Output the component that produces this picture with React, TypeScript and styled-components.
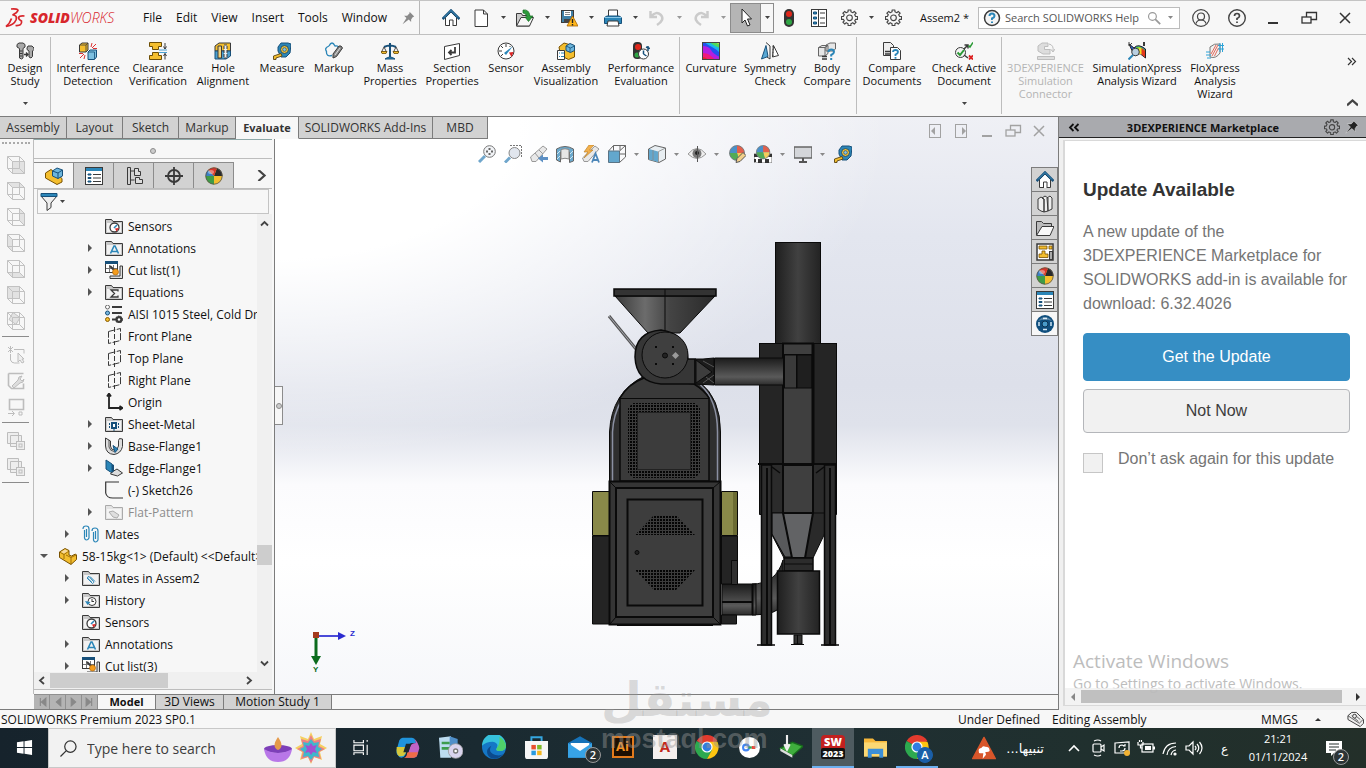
import React, { ReactNode } from "react";
import styled, { createGlobalStyle, css } from "styled-components";

const ui = `"Open Sans", "Noto Sans", sans-serif`;

const GlobalStyle = createGlobalStyle`
  *, *::before, *::after { box-sizing: border-box; }
  body { margin: 0; background: #f7f7f7; color: #111; font-family: ${ui}; font-size: 12px; }
  button, input { font: inherit; color: inherit; }
  button { border: 0; padding: 0; background: none; display: inline-flex; align-items: center; justify-content: center; }
`;

/* ---------- icon artwork, 18 x 18 grid ---------- */

const ink = "#3a3a3a";
const blue = "#2b86b8";
const navy = "#17507a";
const gold = "#f4be2e";

const folder = (
  <g>
    <path d="M.5 16.500V2.500h6l1.500 2h9.500v12z" fill="#c9c9c9" stroke={ink} />
    <rect x="2" y="6" width="14" height="9" fill="#f2f2f2" />
  </g>
);
const gauge = (
  <g>
    <circle cx="9.500" cy="10.500" r="4.500" fill="#fff" stroke={ink} strokeWidth="1.300" />
    <path d="M9 11l3-3" stroke={blue} strokeWidth="1.600" />
    <path d="M10 11.500l4-.5-2.500 3.500z" fill="#d22" />
  </g>
);
const gear = (
  <g fill="none" stroke="#444" strokeWidth="1.200">
    <path d="M7.500 1h3v2l2 1 1.500-1.500 2 2L14.500 6l1 2h2v3h-2l-1 1.500 1.500 1.500-2 2-1.500-1.500-2 1v2h-3v-2l-2-1L4 16l-2-2 1.500-1.500-1-1.500h-2V8h2l1-2L2 4.500l2-2L5.500 4l2-1z" strokeLinejoin="round" />
    <circle cx="9" cy="9.300" r="3" />
  </g>
);
const wireCube = (face: string) => (
  <g fill="none" stroke="#c2c2c2">
    <path d={face} fill="#e2e2e2" />
    <path d="M.5 .5h12v12H.5zM5.500 5.500h12v12h-12zM.5 .5l5 5M12.500 .5l5 5M.5 12.500l5 5M12.500 12.500l5 5" />
  </g>
);
const tape = (
  <g>
    <path d="M5 9V5l3-4h7l3 1-1 9-4 4H8z" fill={blue} stroke={navy} />
    <circle cx="11.500" cy="7.500" r="4" fill={gold} stroke={navy} />
    <circle cx="11.500" cy="7.500" r="1.800" fill="#8cc3e2" stroke={navy} strokeWidth=".7" />
    <path d="M8 11.500l-7.500 2.500v3.500H3v-1.500l6-2z" fill={gold} stroke="#5a4410" strokeWidth=".9" />
  </g>
);
const ball = (
  <g>
    <circle cx="9" cy="9" r="8.500" fill={gold} />
    <path d="M9 9l3-8a8.500 8.500 0 0 1 5.500 8z" fill="#2a2a2a" />
    <path d="M9 9L3 3a8.500 8.500 0 0 1 9-2z" fill="#d9362b" />
    <path d="M9 9L.5 9a8.500 8.500 0 0 1 2.500-6z" fill="#3b7fc4" />
    <path d="M9 9H.5a8.500 8.500 0 0 0 8.500 8.500z" fill="#3f9c46" />
    <circle cx="9" cy="9" r="8.200" fill="none" stroke="#555" strokeWidth=".8" />
    <ellipse cx="6" cy="5" rx="3" ry="2" fill="#fff" opacity=".4" />
  </g>
);
const viewBall = (
  <g>
    <circle cx="9" cy="8" r="7.500" fill="#4a90c8" />
    <path d="M9 8V.5a7.500 7.500 0 0 1 7.500 7.500z" fill="#e2604c" />
    <path d="M9 8h7.500A7.500 7.500 0 0 1 11 15z" fill="#f3cd5a" />
    <path d="M9 8H1.500A7.500 7.500 0 0 0 11 15z" fill="#52ab56" />
    <circle cx="9" cy="8" r="7.500" fill="none" stroke="#777" strokeWidth=".8" />
  </g>
);
const listBox = (
  <g>
    <rect x=".5" y=".5" width="17" height="17" fill="#fff" stroke={ink} />
    <rect x="1" y="1" width="16" height="3" fill={blue} />
    <path d="M3 7h3v1H3zM3 10.500h3v1H3zM3 14h3v1H3z" stroke={navy} fill={blue} />
    <path d="M8 7.500h8M8 11h8M8 14.500h8" stroke={ink} />
  </g>
);
const plane = (
  <g fill="none" stroke={ink}>
    <path d="M3.500 4.500l12-3v12l-12 3z" strokeDasharray="7 1.500" />
    <path d="M9.500 0v18" strokeDasharray="5 2" />
  </g>
);
const table = (
  <g>
    <rect x=".5" y=".5" width="12" height="11" fill="#fff" stroke={ink} />
    <rect x="0" y="0" width="13" height="3" fill={navy} />
    <path d="M1 7.500h11M4.500 4v7M8.500 4v7" stroke="#777" />
    <path d="M15 5h2.500v12.500H5V15h10z" fill="#ddd" stroke={ink} />
    <path d="M5 5l5 5" stroke={ink} strokeWidth="2" />
    <circle cx="10.500" cy="11" r="3" fill="#f59c1c" stroke="#a05a00" strokeWidth=".6" />
  </g>
);
const home = (
  <g>
    <path d="M3.500 8.500v8h11v-8L9 3z" fill="#fff" stroke={ink} />
    <path d="M7.500 17v-6h3.500v6" fill="#fff" stroke={ink} />
    <path d="M.5 10L9 1.500l8.500 8.500" fill="none" stroke={navy} strokeWidth="2.500" />
    <path d="M2 8.500L9 1.500l7 7" fill="none" stroke="#4fa3cf" strokeWidth=".8" />
  </g>
);
const chrome = (
  <g>
    <path d="M9 9L1.200 4.500A9 9 0 0 1 16.800 4.500z" fill="#e33b2e" />
    <path d="M9 9L1.200 4.500A9 9 0 0 0 9 18l3.800-6.500z" fill="#2da94f" />
    <path d="M9 5h7.800A9 9 0 0 1 9 18l3.800-7z" fill="#fdc511" />
    <circle cx="9" cy="9" r="4.200" fill="#fff" />
    <circle cx="9" cy="9" r="3.300" fill="#2f7de1" />
  </g>
);
const compareDocs = (
  <g>
    <path d="M.5 .5h7l3 3v10H.500z" fill="#eee" stroke={ink} />
    <path d="M7.500 5.500h7l3 3v9h-10z" fill="#fff" stroke={ink} />
    <path d="M2 9.500h5M2 12h5" stroke={ink} strokeWidth="1.500" />
    <path d="M10 10q0-2 2.500-2t2.500 2q0 1.500-2.500 2.500v1.500M12.500 15v1.800" stroke={blue} strokeWidth="1.800" fill="none" />
  </g>
);

const art: Record<string, ReactNode> = {
  home,
  gear,
  tape,
  ball,
  listBox,
  plane,
  table,
  chrome,
  compareDocs,
  newDoc: <path d="M3 1h8.500l4 4v12.500H3zM11.500 1v4h4" fill="#fff" stroke={ink} />,
  openDoc: (
    <g>
      <path d="M.5 17V4.500h5l1 2h7V17z" fill="#ccc" stroke={ink} />
      <path d="M.5 17L5 8.500h12.500L13.500 17z" fill="#f6f6f6" stroke={ink} />
      <path d="M7 1q6-1 7 6h3l-4.500 5.500L9 8h2q-1-4-4-4z" fill="#2c9b3b" stroke="#176c23" strokeWidth=".7" />
    </g>
  ),
  save: (
    <g>
      <rect x="1.500" y="1.500" width="12" height="12" fill="#3f7fa6" stroke={ink} />
      <rect x="4" y="2" width="7" height="5" fill="#fff" />
      <path d="M5 3.500h5M5 5.500h5" stroke="#888" />
      <rect x="4" y="10" width="6" height="4" fill="#444" />
      <path d="M12.500 7L18 17H7z" fill="#ffb71b" stroke="#a86200" strokeWidth=".8" />
      <path d="M12.500 10v4M12.500 15v1.500" stroke="#222" strokeWidth="1.400" />
    </g>
  ),
  print: (
    <g>
      <path d="M4.500 1h9v7h-9z" fill="#fff" stroke={ink} />
      <path d="M.5 8.500L3 7h12l2.500 1.500v6H.500z" fill={blue} stroke={navy} />
      <path d="M.5 8.500h17" stroke="#8cc8e8" />
      <path d="M4 12h10l1 5H3z" fill="#fff" stroke={ink} />
    </g>
  ),
  undo: <path d="M2.500 2v6H9M3 7.500q5-6 10-1.500 4 5-4 10" fill="none" stroke="#cbcbcb" strokeWidth="2.500" />,
  redo: <path d="M15.500 2v6H9M15 7.500q-5-6-10-1.500-4 5 4 10" fill="none" stroke="#cbcbcb" strokeWidth="2.500" />,
  cursor: <path d="M5 0v14l3-3 2.500 6 2.500-1-2.500-6h4z" fill="#fff" stroke="#222" />,
  traffic: (
    <g>
      <rect x="4" y="0" width="10" height="18" rx="5" fill="#333" />
      <circle cx="9" cy="5" r="3" fill="#e0281c" />
      <circle cx="9" cy="13" r="3" fill="#2fa544" />
    </g>
  ),
  options: (
    <g>
      <rect x="1.500" y=".5" width="15" height="17" fill="#fff" stroke={ink} />
      <path d="M3.500 3h3v2h-3zM3.500 8h3v2h-3zM3.500 13h3v2h-3z" fill={blue} stroke={navy} />
      <path d="M8.500 1v16M10 4h5M10 9h5M10 14h5" stroke={ink} />
    </g>
  ),
  pin: <path d="M11 1l6 6-2 1-2 3v3l-3-3-8 6 5-8-3-3 4 0 3-3z" fill="#8a8a8a" />,
  pinDark: <path d="M11 1l6 6-2 1-2 3v4l-4-4-8 6 6-8-4-4 5 0 3-3z" fill="#222" stroke="#eee" strokeWidth=".6" />,
  search: (
    <g fill="none" stroke="#999" strokeWidth="1.500">
      <circle cx="7" cy="7" r="5" />
      <path d="M10.500 10.500l6.500 6.500" strokeWidth="2.200" />
    </g>
  ),
  helpBadge: (
    <g>
      <circle cx="9" cy="9" r="7.500" fill="#f4f4f4" stroke={ink} strokeWidth="1.500" />
      <path d="M6.500 7q0-2.500 2.500-2.500T11.500 7q0 1.500-2.500 2.500v1.500M9 12.500v1.500" fill="none" stroke={blue} strokeWidth="2" />
    </g>
  ),
  help: (
    <g fill="none" stroke="#444" strokeWidth="1.400">
      <circle cx="9" cy="9" r="8.300" />
      <path d="M6.500 7q0-2.500 2.500-2.500T11.500 7q0 1.500-2.500 2.500v1.500M9 12.500v1.500" strokeWidth="1.700" />
    </g>
  ),
  user: (
    <g fill="none" stroke="#444" strokeWidth="1.200">
      <circle cx="9" cy="9" r="8.300" />
      <circle cx="9" cy="7.500" r="3.500" />
      <path d="M4 14.500q1-3.500 5-3.500t5 3.500" />
    </g>
  ),
  minimize: <path d="M4 14h10" stroke="currentColor" strokeWidth="2" />,
  restore: (
    <g fill="none" stroke="currentColor" strokeWidth="1.300">
      <path d="M6.500 8V3.500h10v7H11" />
      <rect x="2" y="8" width="9" height="6" />
    </g>
  ),
  close: <path d="M4 4l10 10M14 4L4 14" stroke="currentColor" strokeWidth="1.500" />,
  prevDoc: (
    <g>
      <rect x="3.500" y="2.500" width="11" height="13" fill="none" stroke="currentColor" />
      <path d="M9 5v8L5 9z" fill="currentColor" />
    </g>
  ),
  nextDoc: (
    <g>
      <rect x="3.500" y="2.500" width="11" height="13" fill="none" stroke="currentColor" />
      <path d="M10 5v8l4-4z" fill="currentColor" />
    </g>
  ),
  bolts: (
    <g fill="#aaa" stroke={ink}>
      <path d="M1 2.500L3 1h4l2 1.500v2.500L7 6.500V16l-1.500 1L3.500 16V6.500L1 5z" />
      <path d="M3.500 9h3M3.500 11.500h3M3.500 14h3" />
      <path d="M12 4h4l2 2v1.500L16.500 9v5.500L15 16l-2-1V9l-2-1.500V6z" />
      <path d="M8 12.500h4M10 10.500l2 2-2 2" fill="none" strokeWidth="1.300" />
    </g>
  ),
  interference: (
    <g>
      <path d="M.5 3L3 1h6v7l-2 2H.500z" fill={gold} stroke={ink} />
      <path d="M.5 3H7v7M7 3l2-2" fill="none" stroke={ink} strokeWidth=".8" />
      <path d="M9 10l2-2h6.500v7l-2 2.500H9z" fill="#7dc0e0" stroke={navy} />
      <path d="M9 10h6.500v7" fill="none" stroke={navy} strokeWidth=".8" />
      <path d="M12 5l1-4M13 6l4-4M14 6.500h4M6 13l-1 4M5 12l-4 4M4 11.500H0" stroke="#d33" />
    </g>
  ),
  clearance: (
    <g>
      <path d="M.5 .5h12v4h-3v3h-6v-3h-3z" fill={gold} stroke="#6d4e05" />
      <path d="M.5 17.500h12v-4h-3v-3h-6v3h-3z" fill={gold} stroke="#6d4e05" />
      <path d="M10 8h8M10 10.500h8" stroke="#4aa0d0" />
      <path d="M16 1v6M14.500 4.500L16 7l1.500-2.500M16 17.500v-6M14.500 14l1.500-2.500 1.500 2.500" stroke={ink} fill="none" />
    </g>
  ),
  hole: (
    <g>
      <path d="M1 4l4-3h11.500v8H1z" fill={gold} stroke={ink} />
      <path d="M1 9h15.500v5L12 17H1z" fill="#4aa0d0" stroke={navy} />
      <path d="M4 4h3.500v12H4z" fill="#f1d27c" stroke={ink} />
      <path d="M10 3h3v13h-3z" fill="#eee" stroke={ink} strokeDasharray="3 1" />
    </g>
  ),
  markup: (
    <g>
      <path d="M4 4q3-6 6 0 4-1 3 3M4 4q-5 2-2.500 5.500Q1 15 7 13.500" fill="none" stroke={blue} strokeWidth="1.300" />
      <path d="M8 12l6-8h2l1.500 2-6 8.500L8 16z" fill="#888" stroke={ink} />
      <path d="M10 13l5-7" stroke="#ddd" />
    </g>
  ),
  scale: (
    <g>
      <path d="M9 1v14M3 5q6-3 12 0" stroke={navy} strokeWidth="2" fill="none" />
      <path d="M4 17q5-4 10 0z" fill={blue} stroke={navy} />
      <path d="M3 5L.5 10h5zM15 5l-2.500 5h5z" fill="none" stroke={ink} strokeWidth=".9" />
      <path d="M0 9.500h6l-1 2H1zM12 9.500h6l-1 2h-4z" fill={gold} stroke="#6d4e05" strokeWidth=".8" />
    </g>
  ),
  section: (
    <g>
      <path d="M1.500 4.500l15-3v12l-15 4z" fill="#fff" stroke={ink} />
      <path d="M12 5v5.500H6M8.500 8L6 10.500 8.500 13" fill="none" stroke={ink} strokeWidth="1.800" />
    </g>
  ),
  sensor: (
    <g>
      <circle cx="9" cy="9" r="8" fill="#fff" stroke={ink} />
      <path d="M9 2v3M2 9h3M4 4l2 2M4 14l2-2M13.500 4l-1 1" stroke={ink} />
      <path d="M7 11l9-7-7 9z" fill={blue} />
      <path d="M12 10.500l4.500-.5-2 5z" fill="#d22" />
    </g>
  ),
  assemblyViz: (
    <g>
      <path d="M2 5l5-4 10.500 3v11l-6 2.500-8-4z" fill={gold} stroke="#7a5200" />
      <path d="M9 4l4-2.500 4.500 2v5l-4 2-4.500-2z" fill="#6db6dc" stroke={navy} />
      <path d="M13 6v4.500M9 4l4.500 2 4-2" fill="none" stroke={navy} strokeWidth=".8" />
      <path d="M.5 8.500h7v9h-7z" fill="#fff" stroke={ink} />
      <path d="M2 11h1M4 11h3M2 14.500h1M4 14.500h3" stroke={blue} />
    </g>
  ),
  performance: (
    <g>
      <rect x="1" y="0" width="9" height="17" rx="4" fill="#333" />
      <circle cx="6" cy="5" r="3" fill="#e0281c" />
      <circle cx="5" cy="13" r="2.500" fill="#2fa544" />
      <circle cx="11.500" cy="12" r="5" fill="#fff" stroke={ink} />
      <path d="M11.500 12V8.500M11.500 12l3 2M14 5l4 1.500M16 4v5" stroke={navy} strokeWidth="1.500" fill="none" />
    </g>
  ),
  curvature: (
    <g>
      <rect x="0" y="0" width="18" height="18" fill="#b31fe0" />
      <path d="M0 4q7 0 9 4t9 7V0H0z" fill="#2450f0" />
      <path d="M2 0q4 3 8 5t8 6V0z" fill="#19b8ea" />
      <path d="M7 0q5 4 11 6V0z" fill="#4fdc5c" />
      <path d="M13 0q2 2 5 2V0z" fill="#d9e23a" />
      <path d="M0 11q6 0 9 3t5 4H0z" fill="#f01a7a" />
      <path d="M0 15q4 0 6 3H0z" fill="#e62a20" />
      <rect x=".5" y=".5" width="17" height="17" fill="none" stroke="#444" />
    </g>
  ),
  symmetry: (
    <g>
      <path d="M5 3.500l2 11L.5 17z" fill="#58a8d4" stroke={navy} />
      <path d="M12.500 3.500l5 10-6 1.500z" fill="#fff" stroke={ink} />
      <path d="M5 .5l4 3.500v13l-3-2" fill="none" stroke={ink} />
      <path d="M12 3.500V15" stroke={ink} strokeDasharray="2 1" />
    </g>
  ),
  bodyCompare: (
    <g>
      <path d="M.5 5.500L4 3.500h6v8l-3 2.500H.500zM8 3l4-2h5.500v6L15 9H8z" fill="#e6e6e6" stroke="#666" />
      <path d="M.5 5.500H7V14M7 5.500l3-2" fill="none" stroke="#666" />
      <path d="M10.500 10q0-2.500 2.700-2.500t2.800 2.500q0 1.500-2.800 3v1.500M13.200 16v2" stroke={blue} strokeWidth="2" fill="none" />
      <path d="M4 14.500h5M4 17h5" stroke={ink} strokeWidth="1.400" />
    </g>
  ),
  checkDoc: (
    <g>
      <circle cx="5.500" cy="10.500" r="5" fill="#f4f4f4" stroke={ink} />
      <path d="M2.500 10.500L5 13l4-5" fill="none" stroke="#2a9a35" strokeWidth="2" />
      <path d="M9 7l3.500-3.500M9.500 3H13v3.500M9 13l4 3" fill="none" stroke={ink} strokeWidth="1.500" />
      <path d="M13.500 3.500L15 5l3-4.500" fill="none" stroke="#2a9a35" strokeWidth="1.500" />
      <path d="M14 13.500l4 4M18 13.500l-4 4" stroke="#d22" strokeWidth="1.800" />
    </g>
  ),
  connector: (
    <g fill="#ddd" stroke="#bdbdbd">
      <path d="M1 4l4-3h6v3.500H7.500v3H13V12H6l-5-3z" />
      <path d="M.5 14.500h17v3H.500z" />
      <path d="M12 2q5 1 4 7M13.500 7l2.500 3 2-3" fill="none" />
    </g>
  ),
  simXpress: (
    <g>
      <path d="M1 2l5 4q4-5 11.500 1v9l-5-4q-4-2-6 2z" fill="#2d64d8" stroke="#222" />
      <path d="M8 5q4-2 9 3v3q-4-4-9-3z" fill="#5fd03c" />
      <path d="M13 6q3 1 4 3v6.500l-4-3.500z" fill="#e33a1d" />
      <path d="M10.500 5.500q2 0 3 1v6l-3-1z" fill="#f2dc25" />
      <circle cx="7.500" cy="10" r="3.800" fill="#b9cfe0" stroke={ink} />
      <path d="M5 13l-4.500 4.500" stroke={blue} strokeWidth="2" />
      <path d="M16 0v4" stroke={ink} strokeWidth="2" />
      <path d="M1 0v4M4 1L1 4" stroke={ink} />
    </g>
  ),
  floXpress: (
    <g>
      <path d="M4 5q4-4 10-3v9q-4 6-10 4z" fill="#f1f1f1" stroke="#777" />
      <path d="M6 14l6-11M5 12l5-9M8.500 14l4-8" stroke="#e2695a" />
      <path d="M0 10h4M0 13h5M1 16h4M12 3.500h6M12 7h6M14 1v9M16.500 1v9" stroke="#2ca3d8" />
    </g>
  ),
  zoomFit: (
    <g>
      <circle cx="11.500" cy="6.500" r="5.800" fill="#f2f4f7" stroke="#777" />
      <path d="M11.500 3v7M8 6.500h7" stroke="#666" strokeDasharray="2 3" strokeWidth="2" />
      <path d="M7 11l-6 6" stroke="#6fa6cc" strokeWidth="3" />
    </g>
  ),
  zoomArea: (
    <g>
      <path d="M6 .5h11.500V13" fill="none" stroke="#777" strokeDasharray="2 1" />
      <circle cx="10.500" cy="8" r="5.500" fill="#e1e6ee" stroke="#888" />
      <path d="M6 12.500l-5 5" stroke="#6fa6cc" strokeWidth="3" />
    </g>
  ),
  prevView: (
    <g>
      <path d="M.5 12L13 1l4 3L6 16.500H2z" fill="#e8e8e8" stroke="#999" />
      <path d="M5 8l4 5M9 5l4 4" stroke="#999" />
      <path d="M8 13.500l5-4V12h5v3h-5v2.500z" fill="#5d90c4" />
    </g>
  ),
  sectionView: (
    <g>
      <path d="M.5 4q8.500-5 17 0v12l-4 1.500V7q-4-2-9 0v10L.500 15z" fill="#6ba9cd" stroke="#666" />
      <path d="M5 4.500q4-1.500 8 0V14q-4-1.500-8 0z" fill="#e6e6e6" stroke="#888" />
      <path d="M1 9l3-3M1 14l3-3M14 9l3-3M14 14l3-3" stroke="#d2e7f3" />
    </g>
  ),
  dynamic: (
    <g>
      <path d="M.5 13L13 1l4 3L6 16.500H2z" fill="#e8e8e8" stroke="#999" />
      <path d="M7 0L2 7h4l-4 6 9-8H7.500L12 0z" fill="#f3b04c" stroke="#b57a22" strokeWidth=".6" />
      <path d="M10 17.500l3.500-9 3.500 9M11 15h5" fill="none" stroke="#4c86b8" strokeWidth="1.800" />
    </g>
  ),
  orient: (
    <g>
      <path d="M.5 6h11v11.500H.500z" fill="#63a7cd" stroke="#5a7486" />
      <path d="M.5 6l5-5.500h12v11.500l-6 5.500M11.500 6l6-5.500M5.500 .5v5M12 .5v5M12 9h5" fill="none" stroke="#666" />
    </g>
  ),
  display: (
    <g>
      <path d="M.5 4L7 .5l10.500 2.500v11L11 17.500l-10.500-3z" fill="#e8eef2" stroke="#666" />
      <path d="M1 4l9 2.500v10.500l-9-2.500z" fill="#63a7cd" />
      <path d="M5 5v10.500M10.500 6.500v11M10.500 6.500l7-3.500" stroke="#888" strokeWidth=".8" />
    </g>
  ),
  eye: (
    <g>
      <path d="M0 9q9-11 18 0-9 9-18 0z" fill="#eee" stroke="#999" />
      <circle cx="9" cy="8.500" r="4.500" fill="#777" />
      <circle cx="9" cy="8" r="2" fill="#222" />
      <path d="M9.500 1v16" stroke="#555" />
    </g>
  ),
  appearance: (
    <g>
      {viewBall}
      <path d="M8 17.500l1-4 6-6 3 3-6 6z" fill="#f1cf8a" stroke="#555" />
    </g>
  ),
  scene: (
    <g>
      <path d="M0 9h18v9H0z" fill="#fff" stroke="#777" />
      <path d="M0 9h4v3H0zM14 9h4v3h-4zM4 14h4v4H4zM11 14h4v4h-4zM0 14h2v3H0z" fill="#333" />
      <g transform="translate(1 0) scale(.9)">{viewBall}</g>
    </g>
  ),
  monitor: (
    <g>
      <rect x="0" y="2" width="18" height="11" fill="#d4d6da" stroke="#666" strokeWidth="1.500" />
      <path d="M9 13v3M5 17h8" stroke="#555" strokeWidth="2" />
    </g>
  ),
  part: (
    <g>
      <path d="M.5 5L6 1.500l4 2V8l2.500 1 4-2 1 1v4.500L12 17.500l-11.500-7z" fill={gold} stroke="#7a5200" />
      <path d="M.5 5L5 7.500l5-3.500M5 7.500V12M12 17v-6.500L17 8M12 10.500L7 8" stroke="#8a5c00" fill="none" strokeWidth=".8" />
      <path d="M2 5l4-2.500 3 1.500-4 2.500z" fill="#f6d9a0" />
    </g>
  ),
  assembly: (
    <g>
      <path d="M.5 6L6 2.500l11 9v3.500L12 17.500.5 11z" fill={gold} stroke="#7a5200" />
      <path d="M7.500 4L12 1l5.500 2v6L13 11.500 7.500 9z" fill="#6db6dc" stroke={navy} />
      <path d="M7.500 4l5.500 2v5.500M13 6l4.500-3" fill="none" stroke={navy} />
    </g>
  ),
  config: (
    <g>
      <path d="M2.500 .5v17M5.500 .5v17M2.500 .5h3M2.500 17.500h3M5.500 4h4M5.500 13h4" fill="none" stroke={ink} />
      <path d="M9.500 1.500h4v3h2v4h-6zM10.500 10.500h4v2h3v4h-7z" fill="#ddd" stroke={ink} />
    </g>
  ),
  target: (
    <g fill="none" stroke={ink} strokeWidth="1.800">
      <circle cx="9" cy="9" r="6" />
      <path d="M9 0v18M0 9h18" />
    </g>
  ),
  filter: (
    <g>
      <path d="M1 3l6 7v7.500l4-3V10l6-7z" fill="#eee" stroke={ink} />
      <path d="M1 .5h16v3H1z" fill={blue} stroke={navy} />
    </g>
  ),
  folderSensor: (
    <g>
      {folder}
      {gauge}
    </g>
  ),
  folderA: (
    <g>
      {folder}
      <path d="M5.500 14.500L9 7h1l3.500 7.500M7 12.500h5" stroke={blue} strokeWidth="1.600" fill="none" />
    </g>
  ),
  folderSum: (
    <g>
      {folder}
      <path d="M13 8.500V7H6l3.500 3.500L6 14h7v-1.500" stroke={ink} strokeWidth="1.300" fill="none" />
    </g>
  ),
  folderSheet: (
    <g>
      {folder}
      <path d="M6 7h6v7H6z" fill={navy} />
      <rect x="8" y="9" width="2" height="3" fill="#fff" />
      <path d="M4.500 8v6M13.500 8v6M9 14v3" stroke={navy} strokeDasharray="2 1" />
    </g>
  ),
  folderClip: (
    <g>
      {folder}
      <path d="M5 9l5.500 5.500q2-1 1-2L7 7.500q-1.500 0-1.500 1.500l4 4M8 7.500l5 5" fill="none" stroke={blue} />
    </g>
  ),
  folderClock: (
    <g>
      {folder}
      <circle cx="10" cy="10.500" r="4" fill="#fff" stroke={ink} />
      <path d="M10 11V8M10 10.500h2" stroke={ink} />
      <path d="M3 10l2.500 4L8.500 11z" fill={blue} />
    </g>
  ),
  folderFlat: (
    <g opacity=".4">
      {folder}
      <path d="M4 9l4-1 6 4-2 3-4-1z" fill="#bbb" stroke={ink} />
    </g>
  ),
  material: (
    <g>
      <path d="M7 2h10M7 8h10M7 14.500h4" stroke={ink} strokeWidth="2" />
      <circle cx="2.500" cy="2" r="2" fill="#fff" stroke="#666" />
      <circle cx="2.500" cy="8" r="2" fill="#7ab8e0" stroke={navy} />
      <circle cx="2.500" cy="14.500" r="2" fill={gold} stroke="#8a5c00" />
      <circle cx="14" cy="14.500" r="3.500" fill={ink} stroke={ink} strokeDasharray="1.500 1" />
      <circle cx="14" cy="14.500" r="1.200" fill="#fff" />
    </g>
  ),
  origin: <path d="M4 1v14h13M2 3.500l2-3 2 3M14.500 13l3 2-3 2" fill="none" stroke="#222" strokeWidth="1.800" />,
  baseFlange: (
    <g>
      <path d="M.5 1v8Q1 17 9 17.500q7-1 8.500-8V2l-3-.5-1 2V9q-1 4-4 4-4 0-4-4V4z" fill="#ddd" stroke={ink} />
      <path d="M4 3v7q1 4 5 4.500" fill="none" stroke={ink} strokeWidth=".8" />
      <path d="M8 8.500l5 3.500-3 3.500z" fill={blue} stroke={navy} />
    </g>
  ),
  edgeFlange: (
    <g>
      <path d="M1 1l6 4v9l-6-4z" fill={blue} stroke={navy} />
      <path d="M7 13l5-3 5.500 4-5 3-7-2z" fill="#ddd" stroke={ink} />
      <path d="M7 5l2 1v6l-2 2z" fill={navy} />
    </g>
  ),
  sketch: <path d="M14 1H.700V12q1 5 7 5H18" fill="none" stroke="#333" strokeWidth="1.200" />,
  clips: (
    <g fill="none" stroke={blue} strokeWidth="1.200">
      <path d="M1 4q0-3 3-3t3 3v9q-1 2-2.500 2T2.500 13V5M4.500 4v8" />
      <path d="M10 6q0-3 3-3t3 3v9q-1 2-2.500 2T11.500 15V7M13.500 6v8" />
    </g>
  ),
  books: (
    <g fill="#eee" stroke={ink}>
      <path d="M2 4l3-2 3 2v13l-3-1-3-2zM6 3l3-2 3 2v13l-4 1V4zM11 3l3-2 2 2v11l-4 2z" />
    </g>
  ),
  folderOpen: (
    <g>
      <path d="M.5 16V2.500h5l2 2h8V8" fill="#bbb" stroke={ink} />
      <path d="M.5 16.500L6 7.500h12l-4 9z" fill="#f8f8f8" stroke={ink} />
    </g>
  ),
  palette: (
    <g>
      <rect x="1" y="1" width="16" height="16" fill="#fff" stroke={ink} strokeWidth="1.500" />
      <path d="M3 3h8v3H3zM13 3h3v3h-3zM6 8h3v3h3v3.500H3V11h3z" fill={gold} stroke="#7a5200" strokeWidth=".8" />
      <rect x="13.500" y="8.500" width="3" height="8" fill="#aaa" stroke={ink} />
    </g>
  ),
  compass: (
    <g>
      <circle cx="9" cy="9" r="9" fill="#104f7e" />
      <circle cx="9" cy="9" r="3" fill="#4a9bc8" stroke="#0a3252" />
      <path d="M3 7v4M15 7v4M7 3.500h4M7 14.500h4" stroke="#cfe6f5" strokeWidth="1.500" />
      <path d="M2 6q7-8 14 0-7-3-14 0z" fill="#fff" opacity=".3" />
    </g>
  ),
  cubeFront: wireCube("M5.500 5.500h12v12h-12z"),
  cubeTop: wireCube("M.5 .5h12l5 5h-12z"),
  cubeRight: wireCube("M12.500 .5l5 5v12l-5-5z"),
  cubeLeft: wireCube("M.5 .5l5 5v12l-5-5z"),
  cubeBottom: wireCube("M.5 12.500h12l5 5h-12z"),
  cubeBack: wireCube("M.5 .5h12v12H.5z"),
  cubeIso: wireCube("M6 .5l7 5-4 7-7-5z"),
  ghostSelect: (
    <g fill="none" stroke="#bdbdbd">
      <path d="M7 3.500h10v4M3.500 8v6q1 3 4 3h5M1 1l5 5M6 1L1 6M3.500 0v7" />
      <path d="M11 7v9l2-2 2 3 2-1-2-3h2z" fill="#eee" />
    </g>
  ),
  ghostTool: (
    <g fill="none" stroke="#bdbdbd">
      <path d="M1.500 1.500h15M1.500 1.500v12l3 3h12v-5" strokeWidth="1.600" />
      <path d="M5 14l6-6q0-4 4-4l-2 3 2 2 2-2q0 4-4 4l-6 5z" fill="#ddd" />
    </g>
  ),
  ghostFrame: (
    <g fill="none" stroke="#bdbdbd">
      <path d="M2.500 1.500h14v10h-14z" strokeWidth="1.600" />
      <path d="M1 15.500h6M5 13l2.500 2.500L5 18M12 14h3v3h-3z" />
    </g>
  ),
  ghostStack: (
    <g fill="#eee" stroke="#bdbdbd">
      <path d="M.5 .5h11v11H.500zM3.500 3.500h11v11h-11z" />
      <rect x="9.500" y="9.500" width="8" height="8" />
      <rect x="12" y="12" width="3" height="3" />
    </g>
  ),
  rocket: (
    <g fill="#eee" stroke={ink}>
      <path d="M1 5l4-3.500h5L17.500 9v4L14 16.500 1 9z" />
      <path d="M5 5l7 6M8 4l6 5M1 5l12 8 4-4" fill="none" strokeWidth=".8" />
      <circle cx="8" cy="5.500" r="2" />
    </g>
  ),
  windows: <path d="M1 3.500L8 2.500v6H1zM9 2.300L17 1v7.500H9zM1 9.500h7v6L1 14.500zM9 9.500h8V17l-8-1.300z" fill="#fff" />,
  lens: (
    <g fill="none" stroke="#333" strokeWidth="1.300">
      <circle cx="11" cy="7" r="6" />
      <path d="M7 11l-6.500 6.500" />
    </g>
  ),
  taskView: <path d="M1 1v3h10V1M1 6.500h10v6H1zM1 17v-2.500h10V17M15 1v2M15 6v11" fill="none" stroke="#fff" strokeWidth="1.200" />,
  copilot: (
    <g>
      <path d="M5 2h7q2 0 2.500 2l.5 2h-3q-2 0-3 3l-2 6q-1 2-3 2-2 0-2.500-2H1q-1-1-.5-4l2-7Q3.500 2 5 2z" fill="#2094dc" />
      <path d="M.5 9h8.500L7 14q-1 2-3 2H2.500Q0 15 .5 9z" fill="#d6c83a" />
      <path d="M14 3q3 3 3.500 7l-1.500 5q-.5 2-3 2H6q2 0 3-3l2-6q1-2 4-2z" fill="#c163c6" />
      <path d="M8.500 13h8l-1 3q-1 1-2.500 1H6q2 0 2.500-4z" fill="#ef6c47" />
      <path d="M7.500 6.500h4l-1 2.500-1.500 4H5.500z" fill="#1c282d" />
    </g>
  ),
  installer: (
    <g>
      <path d="M0 2l9-1v16H1z" fill="#bcdcf0" />
      <path d="M8 1l6 2v12H8z" fill="#4f8fc9" />
      <path d="M2 5h6v2H2zM2 9h6v2H2z" fill="#3c9c4e" />
      <circle cx="12.500" cy="12" r="5.500" fill="#d9d4ee" stroke="#999" strokeWidth=".6" />
      <circle cx="12.500" cy="12" r="1.500" fill="#fff" stroke="#777" />
    </g>
  ),
  edge: (
    <g>
      <circle cx="9" cy="9" r="9" fill="#1577c6" />
      <path d="M0 8A9 9 0 0 1 18 8q0 4-5 4-3 0-2-2 2-4-3-5-5 0-8 3z" fill="#36c1dc" />
      <path d="M13 1.500A9 9 0 0 1 18 8q0 4-5 4-3 0-2-2 3-4 2-8.500z" fill="#4fd16a" />
      <path d="M7 8q-3 5 3 7 4 1 6-1-4 5-9 3.500Q3 15 4 11q1-2 3-3z" fill="#0c4a8c" />
    </g>
  ),
  store: (
    <g>
      <path d="M5 4V1h8v3" fill="none" stroke="#35a7e0" strokeWidth="1.500" />
      <path d="M0 4h18v12q0 2-2 2H2q-2 0-2-2z" fill="#f6f6f6" />
      <path d="M5 7h3.500v3.500H5z" fill="#e8502e" />
      <path d="M9.500 7H13v3.500H9.500z" fill="#7db928" />
      <path d="M5 11.500h3.500V15H5z" fill="#2a9be0" />
      <path d="M9.500 11.500H13V15H9.500z" fill="#f5b721" />
    </g>
  ),
  mail: (
    <g>
      <path d="M0 6l9-5 9 5v11H0z" fill="#1673b9" />
      <path d="M2 6h14v6H2z" fill="#fff" />
      <path d="M0 6l9 6 9-6v11H0z" fill="#37a3e6" />
    </g>
  ),
  folderWin: (
    <g>
      <path d="M0 2h7l2 2h9v12H0z" fill="#f6b73a" />
      <path d="M0 5h18v11H0z" fill="#fbd873" />
      <path d="M3 10h12v7h-3v-3H6v3H3z" fill="#3b8fd8" />
    </g>
  ),
  key: (
    <g>
      <circle cx="9" cy="9" r="9" fill="#fff" />
      <circle cx="6" cy="9" r="2.500" fill="none" stroke="#4285f4" strokeWidth="1.800" />
      <path d="M8 9h3" stroke="#34a853" strokeWidth="2" />
      <path d="M11 9h3" stroke="#ea4335" strokeWidth="2.500" />
    </g>
  ),
  greenBook: (
    <g>
      <path d="M1 10l9-4.500 8 3-8 7z" fill="#3fae3d" stroke="#176b1c" />
      <path d="M1 10v2l9 5v-2z" fill="#ddd" />
      <path d="M6 0v9M4 7l2 4 2-4" stroke="#eee" strokeWidth="1.600" fill="#eee" />
    </g>
  ),
  warn: (
    <g>
      <path d="M9 1l8.500 16H.500z" fill="#d8562a" stroke="#d8562a" strokeLinejoin="round" />
      <path d="M5 11q0-2 2-2 1-2 3-1 3 0 3 2 1 2-2 2h-1l.5 2L8 17l.5-4H6q-1 0-1-2z" fill="#fff" />
    </g>
  ),
  chevUp: <path d="M4 12l5-5 5 5" fill="none" stroke="currentColor" strokeWidth="1.600" />,
  camera: (
    <g fill="none" stroke="#fff" strokeWidth="1.200">
      <rect x="4" y="5" width="8" height="8" rx="1" />
      <path d="M12 8l3-2v6l-3-2M5 2q4-2 7 0M5 16q4 2 7 0" />
    </g>
  ),
  sync: (
    <g fill="none" stroke="#fff" strokeWidth="1.200">
      <path d="M2 4l14-1v11H2zM6 9q0-3 3-3l3 1M12 5v2h-2M12 9q0 3-3 3H7" />
      <circle cx="14" cy="14" r="3" fill="#f2b233" stroke="none" />
    </g>
  ),
  battery: (
    <g fill="none" stroke="#fff" strokeWidth="1.200">
      <rect x="5" y="5" width="11" height="8" />
      <path d="M17 7.500v3" strokeWidth="2" />
      <rect x="8" y="7" width="6" height="4" fill="#fff" stroke="none" />
      <path d="M1 3v3h5V3M2.500 1v2M4.500 1v2M3.500 6v3h2" />
    </g>
  ),
  wifi: (
    <g fill="none" stroke="#fff" strokeWidth="1.200">
      <path d="M2 15Q4 4 15 4M6 16q1-8 9-8.500M10 16q1-4.500 5-5" />
      <circle cx="14" cy="15" r="1" fill="#fff" />
    </g>
  ),
  volume: <path d="M1 7h3l4-4v12l-4-4H1zM10 7q2 2 0 4M12 5q3.500 4 0 8M14.500 3q5 6 0 12" fill="none" stroke="#fff" strokeWidth="1.200" />,
  notes: (
    <g>
      <path d="M1 2h16v12H9l-3 3v-3H1z" fill="#fff" />
      <path d="M4 5h10M4 8h10M4 11h7" stroke="#26302f" strokeWidth="1.200" />
    </g>
  ),
};

const Icon = ({ name, size = 18 }: { name: string; size?: number }) => (
  <svg width={size} height={size} viewBox="0 0 18 18" aria-hidden="true">
    {art[name]}
  </svg>
);

const Caret = ({ color = "#444" }: { color?: string }) => (
  <svg width="5" height="3" viewBox="0 0 5 3" aria-hidden="true">
    <path d="M0 0h5L2.500 3z" fill={color} />
  </svg>
);

/* ---------- shell ---------- */

const App = styled.div`
  position: relative;
  min-height: 100vh;
  display: flex;
  flex-direction: column;
  overflow: hidden;
`;

const TitleBar = styled.header`
  display: flex;
  align-items: stretch;
  height: 35px;
  border-top: 1px solid #c4c4c4;
  border-bottom: 1px solid #c0c0c0;
`;

const Brand = styled.div`
  display: flex;
  align-items: center;
  gap: 5px;
  width: 136px;
  padding-left: 5px;
  color: #d8262c;
  font-size: 14px;
  font-style: italic;
  font-weight: 300;
  white-space: nowrap;
  b { font-weight: 800; }
`;

const MenuNav = styled.nav`
  display: flex;
  align-items: center;
  width: 284px;
  border-right: 1px solid #b8b8b8;
`;

const MenuButton = styled.button`
  padding: 0 7px;
`;

const QuickTools = styled.div`
  display: flex;
  align-items: center;
  padding-left: 16px;
`;

const QuickButton = styled.button<{ $w: number }>`
  width: ${(p) => p.$w}px;
  height: 30px;
`;

const SelectTool = styled.div`
  display: flex;
  width: 44px;
  height: 30px;
  border: 1px solid #8c8c8c;
  button:first-child { width: 30px; background: #b5b5b5; border-right: 1px solid #8c8c8c; }
  button:last-child { width: 12px; }
`;

const DocName = styled.span`
  align-self: center;
  padding-left: 12px;
  font-size: 11px;
`;

const TitleRight = styled.div`
  display: flex;
  align-items: center;
  margin-left: auto;
  padding-right: 3px;
  color: #333;
`;

const HelpSearch = styled.label`
  display: flex;
  align-items: center;
  gap: 4px;
  width: 202px;
  height: 22px;
  margin-right: 3px;
  padding: 0 4px;
  background: #fff;
  border: 1px solid #bcbcbc;
  input { flex: 1; min-width: 0; padding: 0; border: 0; outline: 0; background: none; font-size: 11px; }
  input::placeholder { color: #555; opacity: 1; }
  button { width: 10px; }
`;

const Ribbon = styled.div`
  display: flex;
  height: 82px;
  border-bottom: 1px solid #7c7c7c;
`;

const RibbonItem = styled.button<{ $w: number; $end?: boolean; $off?: boolean }>`
  position: relative;
  flex: none;
  flex-direction: column;
  justify-content: flex-start;
  width: ${(p) => p.$w}px;
  margin: 2px 0;
  padding-top: 5px;
  gap: 1px;
  line-height: 13px;
  font-size: 11px;
  white-space: pre;
  ${(p) => p.$end && css`border-right: 1px solid #bdbdbd;`}
  ${(p) => p.$off && css`color: #b4b4b4;`}
`;

const RibbonCaret = styled.span`
  position: absolute;
  bottom: 9px;
  line-height: 3px;
`;

const RibbonEnd = styled.div`
  display: flex;
  flex-direction: column;
  justify-content: space-between;
  align-items: center;
  margin-left: auto;
  width: 28px;
  padding: 22px 0 7px;
`;

const Work = styled.div`
  display: flex;
  flex: 1;
  min-height: 0;
`;

const Stage = styled.main`
  display: flex;
  flex-direction: column;
  flex: 1;
  min-width: 0;
  background:
    radial-gradient(ellipse 620px 330px at 270px 10px, #fff 40%, rgba(255, 255, 255, 0) 100%),
    linear-gradient(180deg, #eff0f5 0, #e3e6ef 20%, #dde0ea 45%, #dfe2eb 52%, #fbfbfd 62%, #fff 75%, #f6f7fa 97%);
`;

const TabRow = styled.div`
  display: flex;
  height: 22px;
`;

const CommandTab = styled.button<{ $on?: boolean; $w: number }>`
  width: ${(p) => p.$w}px;
  border-right: 1px solid #7c7c7c;
  border-bottom: 1px solid ${(p) => (p.$on ? "#f7f7f7" : "#7c7c7c")};
  background: ${(p) => (p.$on ? "#f7f7f7" : "#d2d2d2")};
  font-weight: ${(p) => (p.$on ? 700 : 400)};
  font-size: ${(p) => (p.$on ? 11 : 12)}px;
  color: #333;
`;

const DocControls = styled.div`
  display: flex;
  align-items: flex-end;
  margin-left: auto;
  padding-right: 6px;
  color: #a2a2a2;
  button { width: 26px; height: 16px; }
`;

const StageBody = styled.div`
  display: flex;
  flex: 1;
  min-height: 0;
`;

/* ---------- left dock ---------- */

const ViewBar = styled.div`
  width: 33px;
  padding: 3px 2px 0 0;
  background: #f7f7f7;
  display: flex;
  flex-direction: column;
  align-items: center;
  button { width: 26px; height: 26px; }
`;

const Grip = styled.div`
  width: 28px;
  height: 3px;
  margin-bottom: 7px;
  border-top: 2px dotted #aaa;
`;

const BarRule = styled.hr`
  width: 27px;
  height: 1px;
  margin: 2px 0 5px;
  border: 0;
  background: #8c8c8c;
`;

const FeaturePanel = styled.aside`
  display: flex;
  flex-direction: column;
  width: 242px;
  padding-right: 2px;
  border-left: 1px solid #bdbdbd;
  border-right: 1px solid #7c7c7c;
  background: #f7f7f7;
`;

const PanelSplit = styled.div`
  display: flex;
  align-items: center;
  justify-content: center;
  height: 20px;
  padding-top: 4px;
  border-top: 1px solid #8fa9a9;
  border-bottom: 1px solid #bdbdbd;
`;

const Knob = styled.i`
  width: 6px;
  height: 6px;
  border: 1px solid #8c8c8c;
  border-radius: 50%;
  background: #ccc;
`;

const PanelTabs = styled.div`
  display: flex;
  height: 27px;
  margin-top: 3px;
  border-bottom: 1px solid #bdbdbd;
  > button:last-child { margin-left: auto; width: 22px; }
`;

const PanelTab = styled.button<{ $on?: boolean }>`
  width: 40px;
  border: 1px solid #8c8c8c;
  border-left: 0;
  border-bottom: 0;
  background: ${(p) => (p.$on ? "#f7f7f7" : "#d2d2d2")};
`;

const FilterBox = styled.label`
  display: flex;
  align-items: center;
  gap: 2px;
  height: 25px;
  margin: 0 3px;
  padding-left: 2px;
  border: 1px solid #c4c4c4;
  input { flex: 1; min-width: 0; border: 0; outline: 0; background: none; }
`;

const TreeArea = styled.div`
  display: flex;
  flex: 1;
  min-height: 0;
`;

const Tree = styled.ul`
  flex: 1 1 0;
  height: 458px;
  min-width: 0;
  margin: 0;
  padding: 1px 0 0;
  overflow: hidden;
  list-style: none;
`;

const TreeRow = styled.li<{ $level: number; $off?: boolean }>`
  display: flex;
  align-items: center;
  height: 22px;
  padding-left: ${(p) => 2 + (p.$level - 1) * 23}px;
  white-space: nowrap;
  color: ${(p) => (p.$off ? "#8c8c8c" : "#111")};
  > svg { flex: none; margin-right: 5px; }
`;

const Twisty = styled.span`
  flex: none;
  display: flex;
  justify-content: center;
  width: 15px;
  margin-right: 8px;
`;

const VScroll = styled.div`
  display: flex;
  flex-direction: column;
  align-items: center;
  width: 15px;
  padding: 4px 0;
  background: #f0f0f0;
  button { height: 10px; }
`;

const VThumb = styled.div`
  width: 15px;
  height: 20px;
  margin: 317px 0 auto;
  background: #cdcdcd;
`;

const HScroll = styled.div`
  display: flex;
  align-items: center;
  height: 17px;
  padding-right: 15px;
  background: #f0f0f0;
`;

const HThumb = styled.div`
  width: 118px;
  height: 15px;
  margin-right: auto;
  background: #cdcdcd;
`;

const PanelFoot = styled.div`
  height: 5px;
  border-top: 1px solid #bdbdbd;
`;

/* ---------- canvas ---------- */

const Canvas = styled.section`
  position: relative;
  flex: 1;
  min-width: 0;
`;

const HeadsUp = styled.div`
  display: flex;
  justify-content: center;
  padding: 6px 4px 0 0;
  button { width: 26px; height: 18px; }
  button[data-caret] { width: 14px; }
`;

const PanelHandle = styled.button`
  position: absolute;
  left: 0;
  top: 247px;
  width: 8px;
  height: 39px;
  border: 1px solid #8c8c8c;
  border-left: 0;
  background: #f7f7f7;
`;

const ModelView = styled.svg`
  position: absolute;
  left: 305px;
  top: 91px;
`;

const Triad = styled.svg`
  position: absolute;
  left: 31px;
  top: 483px;
`;

const RailTabs = styled.div`
  position: absolute;
  right: 0;
  top: 28px;
  display: flex;
  flex-direction: column;
  width: 27px;
  border: 1px solid #7c7c7c;
  border-bottom: 0;
  button { height: 24px; background: #d2d2d2; border-bottom: 1px solid #7c7c7c; }
  button:last-child { background: #f7f7f7; }
`;

const ModelTabs = styled.div`
  display: flex;
  height: 16px;
  padding-left: 34px;
  border-bottom: 1px solid #7c7c7c;
  background: #f7f7f7;
`;

const StepButton = styled.button`
  width: 16px;
  border: 1px solid #909090;
  border-width: 1px 1px 0 0;
  background: #b4b4b4;
`;

const ModelTab = styled.button<{ $on?: boolean; $w: number }>`
  width: ${(p) => p.$w}px;
  border-top: 1px solid #7c7c7c;
  border-right: 1px solid #7c7c7c;
  background: ${(p) => (p.$on ? "#f7f7f7" : "#d2d2d2")};
  font-weight: ${(p) => (p.$on ? 700 : 400)};
  font-size: ${(p) => (p.$on ? 11 : 12)}px;
  line-height: 14px;
`;

const ModelTabsRest = styled.div`
  flex: 1;
  border-top: 1px solid #7c7c7c;
`;

/* ---------- task pane ---------- */

const TaskPane = styled.aside`
  display: flex;
  flex-direction: column;
  width: 308px;
  border-left: 1px solid #7c7c7c;
  background: #f0f0f0;
`;

const PaneHead = styled.div`
  display: flex;
  align-items: center;
  height: 21px;
  padding: 0 4px 0 5px;
  border-bottom: 1px solid #222;
  background: #a9aaae;
  font-weight: 700;
  font-size: 11px;
  h2 { flex: 1; margin: 0; font: inherit; text-align: center; }
  button { width: 20px; }
`;

const PaneBody = styled.div`
  display: flex;
  flex-direction: column;
  flex: 1;
  margin: 2px 0 4px 4px;
  border: 2px solid #d9d9d9;
  border-width: 1px 0 1px 2px;
  background: #fff;
  font-family: "Liberation Sans", Arial, sans-serif;
  font-size: 16px;
`;

const Notice = styled.div`
  flex: 1;
  padding: 37px 16px 0 18px;
  color: #757575;
  h3 { margin: 0 0 18px; color: #333; font-size: 19px; line-height: 24px; }
  p { margin: 0 0 17px; line-height: 24px; }
`;

const NoticeButton = styled.button<{ $primary?: boolean }>`
  width: 100%;
  height: ${(p) => (p.$primary ? 48 : 44)}px;
  margin-bottom: ${(p) => (p.$primary ? 8 : 14)}px;
  border: 1px solid ${(p) => (p.$primary ? "#368ec4" : "#b4b6ba")};
  border-radius: 4px;
  background: ${(p) => (p.$primary ? "#368ec4" : "#f1f1f1")};
  color: ${(p) => (p.$primary ? "#fff" : "#3d3d3d")};
`;

const CheckLine = styled.label`
  display: flex;
  align-items: flex-start;
  gap: 15px;
  line-height: 24px;
  input {
    appearance: none;
    width: 20px;
    height: 20px;
    margin: 6px 0 0;
    border: 1px solid #c6c6c6;
    background: #f1f1f1;
  }
`;

const Activation = styled.div`
  height: 39px;
  padding-left: 8px;
  color: #bdbdbd;
  font-family: ${ui};
  font-size: 14px;
  line-height: 22px;
  white-space: nowrap;
  strong { display: block; font-size: 19px; line-height: 24px; font-weight: 400; }
`;

const PaneScroll = styled.div`
  display: flex;
  align-items: center;
  justify-content: space-between;
  height: 17px;
  padding: 0 6px;
  background: rgba(240, 240, 240, 0.8);
  div { flex: 1; height: 13px; margin: 0 14px 0 6px; background: rgba(170, 170, 170, 0.7); }
`;

/* ---------- status + taskbar ---------- */

const StatusBar = styled.footer`
  display: flex;
  align-items: center;
  height: 18px;
  padding: 0 2px 0 1px;
  font-size: 12px;
  span:first-child { margin-right: auto; }
`;

const StatusCell = styled.span<{ $w: number }>`
  display: flex;
  align-items: center;
  width: ${(p) => p.$w}px;
`;

const Taskbar = styled.div`
  display: flex;
  align-items: stretch;
  height: 40px;
  background: linear-gradient(90deg, #16232c 0, #1a2a31 35%, #1f2f33 60%, #20302e 80%, #232f29 100%);
  color: #fff;
`;

const TaskButton = styled.button<{ $w: number; $state?: "on" | "open" }>`
  position: relative;
  width: ${(p) => p.$w}px;
  border-bottom: 2px solid transparent;
  ${(p) => p.$state === "on" && css`background: #4e5b60; border-bottom-color: #6cb0f0;`}
  ${(p) => p.$state === "open" && css`border-bottom-color: #6cb0f0;`}
`;

const WinSearch = styled.label`
  display: flex;
  align-items: center;
  width: 288px;
  padding: 0 8px 0 11px;
  gap: 10px;
  border: 1px solid #c8c8c8;
  background: #f2f2f2;
  input { flex: 1; min-width: 0; padding: 0; border: 0; outline: 0; background: none; font-size: 14px; }
  input::placeholder { color: #3d3d3d; opacity: 1; }
`;

const Badge = styled.span<{ $x: number; $bg?: string }>`
  position: absolute;
  right: ${(p) => p.$x}px;
  bottom: 3px;
  width: 16px;
  height: 16px;
  border: 1px solid ${(p) => p.$bg ?? "#9a9a9a"};
  border-radius: 50%;
  background: ${(p) => p.$bg ?? "#2c3436"};
  color: #fff;
  font-size: 11px;
  font-weight: 600;
  line-height: 14px;
  text-align: center;
`;

const AppTile = styled.span<{ $bg: string; $fg: string; $edge: string; $size: number }>`
  width: ${(p) => p.$size}px;
  height: ${(p) => p.$size}px;
  border: 2px solid ${(p) => p.$edge};
  background: ${(p) => p.$bg};
  color: ${(p) => p.$fg};
  font-size: ${(p) => p.$size - 9}px;
  font-weight: 700;
  line-height: ${(p) => p.$size - 5}px;
  text-align: center;
`;

const CadTile = styled.span`
  display: flex;
  flex-direction: column;
  width: 24px;
  height: 24px;
  border-radius: 4px;
  background: #c3201f;
  font-weight: 800;
  font-size: 11px;
  line-height: 13px;
  text-align: center;
  small { background: #111; font-size: 9px; line-height: 11px; border-radius: 2px; }
`;

const Tray = styled.div`
  display: flex;
  align-items: center;
  margin-left: auto;
  padding-right: 12px;
  button { position: relative; height: 40px; }
`;

const TrayText = styled.span`
  width: 60px;
  padding-right: 18px;
  font-family: "DejaVu Sans", sans-serif;
  font-size: 13px;
  white-space: nowrap;
`;

const Clock = styled.time`
  width: 72px;
  font-size: 11px;
  line-height: 18px;
  text-align: center;
`;

const Watermark = styled.div`
  position: absolute;
  left: 601px;
  bottom: 15px;
  width: 165px;
  color: rgba(150, 150, 150, 0.32);
  text-align: center;
  pointer-events: none;
  font-family: "DejaVu Sans", sans-serif;
  font-weight: 700;
  strong { display: block; font-size: 47px; line-height: 50px; }
  span { display: block; color: rgba(150, 150, 150, 0.45); font-family: "Liberation Sans", sans-serif; font-size: 27px; line-height: 28px; }
`;

/* ---------- data ---------- */

type Tool = { icon: string; label: string; w: number; end?: boolean; caret?: boolean; off?: boolean };

const ribbon: Tool[] = [
  { icon: "bolts", label: "Design\nStudy", w: 51, end: true, caret: true },
  { icon: "interference", label: "Interference\nDetection", w: 74 },
  { icon: "clearance", label: "Clearance\nVerification", w: 66 },
  { icon: "hole", label: "Hole\nAlignment", w: 64 },
  { icon: "tape", label: "Measure", w: 54 },
  { icon: "markup", label: "Markup", w: 50 },
  { icon: "scale", label: "Mass\nProperties", w: 62 },
  { icon: "section", label: "Section\nProperties", w: 62 },
  { icon: "sensor", label: "Sensor", w: 46 },
  { icon: "assemblyViz", label: "Assembly\nVisualization", w: 74 },
  { icon: "performance", label: "Performance\nEvaluation", w: 77, end: true },
  { icon: "curvature", label: "Curvature", w: 62 },
  { icon: "symmetry", label: "Symmetry\nCheck", w: 56 },
  { icon: "bodyCompare", label: "Body\nCompare", w: 59, end: true },
  { icon: "compareDocs", label: "Compare\nDocuments", w: 70 },
  { icon: "checkDoc", label: "Check Active\nDocument", w: 75, end: true, caret: true },
  { icon: "connector", label: "3DEXPERIENCE\nSimulation\nConnector", w: 87, off: true },
  { icon: "simXpress", label: "SimulationXpress\nAnalysis Wizard", w: 96 },
  { icon: "floXpress", label: "FloXpress\nAnalysis\nWizard", w: 60 },
];

const commandTabs: [string, number][] = [
  ["Assembly", 67], ["Layout", 56], ["Sketch", 56], ["Markup", 57], ["Evaluate", 63], ["SOLIDWORKS Add-Ins", 134], ["MBD", 55],
];

type Node = { icon: string; label: string; level: number; twist?: "open" | "shut"; off?: boolean };

const tree: Node[] = [
  { icon: "folderSensor", label: "Sensors", level: 3 },
  { icon: "folderA", label: "Annotations", level: 3, twist: "shut" },
  { icon: "table", label: "Cut list(1)", level: 3, twist: "shut" },
  { icon: "folderSum", label: "Equations", level: 3, twist: "shut" },
  { icon: "material", label: "AISI 1015 Steel, Cold Drawn", level: 3 },
  { icon: "plane", label: "Front Plane", level: 3 },
  { icon: "plane", label: "Top Plane", level: 3 },
  { icon: "plane", label: "Right Plane", level: 3 },
  { icon: "origin", label: "Origin", level: 3 },
  { icon: "folderSheet", label: "Sheet-Metal", level: 3, twist: "shut" },
  { icon: "baseFlange", label: "Base-Flange1", level: 3, twist: "shut" },
  { icon: "edgeFlange", label: "Edge-Flange1", level: 3, twist: "shut" },
  { icon: "sketch", label: "(-) Sketch26", level: 3 },
  { icon: "folderFlat", label: "Flat-Pattern", level: 3, twist: "shut", off: true },
  { icon: "clips", label: "Mates", level: 2, twist: "shut" },
  { icon: "part", label: "58-15kg<1> (Default) <<Default>", level: 1, twist: "open" },
  { icon: "folderClip", label: "Mates in Assem2", level: 2, twist: "shut" },
  { icon: "folderClock", label: "History", level: 2, twist: "shut" },
  { icon: "folderSensor", label: "Sensors", level: 2 },
  { icon: "folderA", label: "Annotations", level: 2, twist: "shut" },
  { icon: "table", label: "Cut list(3)", level: 2, twist: "shut" },
];

const quick: { icon: string; name: string; caret?: string }[] = [
  { icon: "home", name: "Home" },
  { icon: "newDoc", name: "New", caret: "#444" },
  { icon: "openDoc", name: "Open", caret: "#444" },
  { icon: "save", name: "Save", caret: "#444" },
  { icon: "print", name: "Print", caret: "#444" },
  { icon: "undo", name: "Undo", caret: "#999" },
  { icon: "redo", name: "Redo", caret: "#999" },
];

const headsUp: [string, boolean][] = [
  ["zoomFit", false], ["zoomArea", false], ["prevView", false], ["sectionView", false], ["dynamic", false],
  ["orient", true], ["display", true], ["eye", true], ["appearance", false], ["scene", true], ["monitor", true], ["tape", false],
];

const viewIcons = ["cubeFront", "cubeTop", "cubeRight", "cubeLeft", "cubeBottom", "cubeBack", "cubeIso"];

/* ---------- drawings ---------- */

const Roaster = () => (
  <ModelView width="270" height="420" viewBox="580 230 270 420" role="img" aria-label="Coffee roaster assembly">
    <defs>
      <linearGradient id="tube" x1="0" x2="1">
        <stop offset="0" stopColor="#1f1f1f" />
        <stop offset=".5" stopColor="#414141" />
        <stop offset="1" stopColor="#232323" />
      </linearGradient>
      <linearGradient id="pipe" x1="0" x2="0" y1="0" y2="1">
        <stop offset="0" stopColor="#1b1b1b" />
        <stop offset=".7" stopColor="#5a5a5a" />
        <stop offset="1" stopColor="#2c2c2c" />
      </linearGradient>
      <linearGradient id="cone" x1="0" x2="1">
        <stop offset="0" stopColor="#3a3a3a" />
        <stop offset=".3" stopColor="#6c6c6c" />
        <stop offset=".55" stopColor="#444" />
        <stop offset="1" stopColor="#2a2a2a" />
      </linearGradient>
      <pattern id="mesh" width="3" height="3" patternUnits="userSpaceOnUse">
        <rect width="3" height="3" fill="#3c3c3c" />
        <rect width="2" height="2" fill="#050505" />
      </pattern>
    </defs>
    <g stroke="#0a0a0a">
      <rect x="775.500" y="242.500" width="45" height="101" fill="url(#tube)" />
      <rect x="759.500" y="343.500" width="77" height="121" fill="#252525" />
      <rect x="783" y="343.500" width="30" height="121" fill="#3f3f3f" strokeWidth="2" />
      <path d="M784 354.500h28" />
      <rect x="784.500" y="355" width="12" height="33" fill="#3a3a3a" />
      <rect x="797" y="355" width="15" height="33" fill="#1f1f1f" />
      <path d="M813 344v120" strokeWidth="3" />
      <path d="M759.500 464.500h77v50h-77z" fill="#2b2b2b" />
      <path d="M783 465h30v48h-30z" fill="#3f3f3f" strokeWidth="2" />
      <path d="M758 464h79" strokeWidth="2" />
      <path d="M771 513h54v20l-12 25h-29l-13-25z" fill="#2a2a2a" />
      <path d="M772 513h11l9 44h-7l-13-23z" fill="#58595b" />
      <path d="M783 513h30l-8 45h-13z" fill="#626365" strokeWidth="2" />
      <path d="M784 558h29v13h-29z" fill="#2c2c2c" strokeWidth="1.500" />
      <path d="M784 564h29" />
      <path d="M752 584q24 0 31-24v44q-5 11-31 11z" fill="url(#pipe)" />
      <path d="M722 584h34v31h-34z" fill="url(#pipe)" />
      <path d="M722 602h30M752.500 584v31" strokeWidth="2" />
      <rect x="777.500" y="571" width="42" height="63" fill="url(#tube)" strokeWidth="1.500" />
      <path d="M794 635h8v9h-8zM791 644.500h13M797.500 635v9" fill="#333" />
      <path d="M761.500 465h10v180h-10zM824.500 465h11v180h-11z" fill="#2e2e2e" strokeWidth="1.500" />
      <path d="M767 468v177M830 468v177" strokeWidth="2" />
      <path d="M757 645h18M821 645h18M772 467l8 6M824 467l-8 6" strokeWidth="1.500" />

      <path d="M592.500 491.500h17v44h-17z" fill="#898949" />
      <path d="M721.500 491.500h16v44h-16z" fill="#898949" />
      <path d="M733 492h4v43h-4z" fill="#6c6c33" stroke="none" />
      <path d="M592.500 536h17v88h-17zM721.500 536h16v48h-16zM721.500 615h15v9h-15z" fill="#242424" />
      <path d="M731.500 560.500h6v24h-6z" fill="#303030" />

      <path d="M609.500 482v-50q2-40 35-56l55 6q21 16 21 50v50z" fill="#2f2f2f" />
      <path d="M612.500 482v-50q2-36 31-52M717.500 482v-50q0-32-17-47" fill="none" stroke="#8b90a2" strokeWidth="1.500" />
      <path d="M620 398q8-14 24-20l50 6q10 6 15 14v83h-89z" fill="#3a3a3a" strokeWidth="1.500" />
      <path d="M620 398.500h89" />
      <path d="M633 403h62l5 5v65l-5 5h-62l-5-5v-65z" fill="url(#mesh)" stroke="none" />
      <rect x="637.500" y="412.500" width="53" height="57" fill="#3c3c3c" stroke="#222" />

      <rect x="609.500" y="481.500" width="111" height="143" fill="#353535" strokeWidth="2" />
      <rect x="616" y="488" width="97" height="129" fill="#3f3f3f" strokeWidth="2" />
      <path d="M610 482l6 6M720 482l-7 6M610 624l6-7M720 624l-7-7M617 625.500h96" />
      <rect x="627.500" y="499.500" width="75" height="106" fill="#3d3d3d" strokeWidth="2" />
      <path d="M635 535l19-20h22l19 20zM635 570h60l-19 20h-22z" fill="url(#mesh)" stroke="none" />
      <circle cx="637" cy="552.500" r="2" fill="#222" />

      <path d="M609 316l27 33" stroke="#555" strokeWidth="3" />
      <path d="M609 316l27 33" stroke="#a3a5ad" />
      <path d="M615 296h100l-35 37h-32z" fill="url(#cone)" />
      <path d="M614 289h102v7H614z" fill="#333" strokeWidth="1.500" />
      <path d="M665 289v44" />
      <path d="M661 330q-26 2-26 27 1 25 26 27h34v-25h-7q-3-26-27-29z" fill="#363636" strokeWidth="1.500" />
      <circle cx="665" cy="355" r="23" fill="#3f3f3f" />
      <path d="M695 359h8l11-1v27l-19-1z" fill="#1c1c1c" />
      <path d="M696 360l16 12-16 11z" fill="#3d3d3d" />
      <path d="M703 361l11 6M706 377l8 6M703 383l11-8" stroke="#555" />
      <path d="M714.500 358h69v27h-69z" fill="url(#pipe)" />
      <circle cx="665" cy="355.500" r="2.500" fill="#222" />
    </g>
    <g fill="#0a0a0a">
      <rect x="655" y="346" width="2" height="2" />
      <rect x="672" y="346" width="2" height="2" />
      <rect x="655" y="363" width="2" height="2" />
      <rect x="672" y="363" width="2" height="2" />
    </g>
    <path d="M675.500 352l3.500 3.500-3.500 3.500-3.500-3.500z" fill="#9a9a9a" />
  </ModelView>
);

const AxisTriad = () => (
  <Triad width="52" height="52" viewBox="0 0 52 52" role="img" aria-label="Axis triad">
    <path d="M10 14h26" stroke="#4a4ad8" strokeWidth="2" />
    <path d="M32 10l8 4-8 4z" fill="#2b2bd0" />
    <path d="M10 14v22" stroke="#0b6b1d" strokeWidth="3" />
    <path d="M5 34h10l-5 9z" fill="#0b6b1d" />
    <path d="M7 10h6v6H7z" fill="#a33a1d" />
    <text x="44" y="14" fontSize="8" fontWeight="700" fontFamily="Liberation Sans" fill="#2b2bd0">Z</text>
    <text x="7" y="50" fontSize="8" fontWeight="700" fontFamily="Liberation Sans" fill="#0b6b1d">Y</text>
  </Triad>
);

const DsMark = () => (
  <svg width="20" height="20" viewBox="0 0 20 20" fill="none" stroke="#d8262c" strokeWidth="1.700" aria-hidden="true">
    <path d="M6 1q7-.5 7 1.500Q12 5 7.500 7q5 0 3.500 5Q9 17 1 18.500q4-3 5.500-8" />
    <path d="M19.500 8q-5-.5-6 1.500 0 2 3 3.500 1 5-6 4.500" />
  </svg>
);

const FestiveArt = () => (
  <svg width="64" height="34" viewBox="0 0 64 34" aria-hidden="true">
    <ellipse cx="15" cy="18" rx="14" ry="4" fill="#7d3fb8" />
    <path d="M1 18q2 13 14 13t14-13q-14 8-28 0z" fill="#b877e8" />
    <path d="M15 6q7 10 0 13-7-3 0-13z" fill="#e59a4a" />
    <path d="M48 1l3 7 8-3-2 8 7 4-7 4 2 8-8-3-3 7-3-7-8 3 2-8-7-4 7-4-2-8 8 3z" fill="#f5d060" />
    <path d="M48 4l3 6 7-2-2 7 6 3-6 3 2 7-7-2-3 6-3-6-7 2 2-7-6-3 6-3-2-7 7 2z" fill="#ec7f86" />
    <path d="M48 8l3 4 5-1-1 5 4 2-4 3 1 5-5-1-3 4-3-4-5 1 1-5-4-3 4-2-1-5 5 1z" fill="#3fb8cb" />
    <path d="M48 12l2 3 4-1-2 4 2 4-4-1-2 3-2-3-4 1 2-4-2-4 4 1z" fill="#a350d0" />
  </svg>
);

const Twist = ({ kind }: { kind?: "open" | "shut" }) => (
  <Twisty>
    {kind && (
      <svg width="8" height="8" viewBox="0 0 8 8" aria-hidden="true">
        <path d={kind === "shut" ? "M2 0l4 4-4 4z" : "M0 2h8L4 6z"} fill="#555" />
      </svg>
    )}
  </Twisty>
);

const Chevron = ({ d, size = 9 }: { d: string; size?: number }) => (
  <svg width={size} height={size} viewBox="0 0 9 9" fill="none" stroke="#444" strokeWidth="1.800" aria-hidden="true">
    <path d={d} />
  </svg>
);

export default function SolidWorks() {
  return (
    <App>
      <GlobalStyle />
      <TitleBar>
        <Brand>
          <DsMark />
          <span><b>SOLID</b>WORKS</span>
        </Brand>
        <MenuNav>
          {["File", "Edit", "View", "Insert", "Tools", "Window"].map((m) => (
            <MenuButton key={m}>{m}</MenuButton>
          ))}
          <MenuButton aria-label="Pin menu"><Icon name="pin" size={14} /></MenuButton>
        </MenuNav>
        <QuickTools>
          {quick.map((q) => (
            <React.Fragment key={q.name}>
              <QuickButton $w={30} aria-label={q.name}><Icon name={q.icon} /></QuickButton>
              {q.caret && <QuickButton $w={14} aria-label={`${q.name} options`}><Caret color={q.caret} /></QuickButton>}
            </React.Fragment>
          ))}
          <SelectTool>
            <button aria-label="Select"><Icon name="cursor" /></button>
            <button aria-label="Select options"><Caret /></button>
          </SelectTool>
          <QuickButton $w={30} aria-label="Rebuild"><Icon name="traffic" /></QuickButton>
          <QuickButton $w={30} aria-label="File properties"><Icon name="options" /></QuickButton>
          <QuickButton $w={30} aria-label="Options"><Icon name="gear" size={17} /></QuickButton>
          <QuickButton $w={14} aria-label="More options"><Caret /></QuickButton>
          <QuickButton $w={30} aria-label="Settings"><Icon name="gear" size={17} /></QuickButton>
        </QuickTools>
        <DocName>Assem2 *</DocName>
        <TitleRight>
          <HelpSearch>
            <Icon name="helpBadge" />
            <input placeholder="Search SOLIDWORKS Help" aria-label="Search SOLIDWORKS Help" />
            <Icon name="search" size={14} />
            <button aria-label="Search scope"><Caret color="#888" /></button>
          </HelpSearch>
          {["user", "help", "minimize", "restore", "close"].map((n) => (
            <QuickButton key={n} $w={36} aria-label={n}><Icon name={n} /></QuickButton>
          ))}
        </TitleRight>
      </TitleBar>

      <Ribbon>
        {ribbon.map((t) => (
          <RibbonItem key={t.label} $w={t.w} $end={t.end} $off={t.off} disabled={t.off}>
            <Icon name={t.icon} />
            <span>{t.label}</span>
            {t.caret && <RibbonCaret><Caret /></RibbonCaret>}
          </RibbonItem>
        ))}
        <RibbonEnd>
          <button aria-label="More tools">
            <svg width="10" height="9" viewBox="0 0 10 9" fill="none" stroke="#333" strokeWidth="1.200"><path d="M1 1l3.500 3.500L1 8M5 1l3.500 3.500L5 8" /></svg>
          </button>
          <button aria-label="Collapse ribbon"><Chevron d="M0 6l4.500-4L9 6" size={11} /></button>
        </RibbonEnd>
      </Ribbon>

      <Work>
        <Stage>
          <TabRow>
            {commandTabs.map(([label, w]) => (
              <CommandTab key={label} $w={w} $on={label === "Evaluate"}>{label}</CommandTab>
            ))}
            <DocControls>
              {["prevDoc", "nextDoc", "minimize", "restore", "close"].map((n) => (
                <button key={n} aria-label={`Document ${n}`}><Icon name={n} /></button>
              ))}
            </DocControls>
          </TabRow>
          <StageBody>
            <ViewBar>
              <Grip />
              {viewIcons.map((n) => <button key={n} aria-label={n}><Icon name={n} /></button>)}
              <BarRule />
              {["ghostSelect", "ghostTool", "ghostFrame"].map((n) => <button key={n} aria-label={n}><Icon name={n} /></button>)}
              <BarRule />
              <button aria-label="Group"><Icon name="ghostStack" /></button>
              <button aria-label="Ungroup"><Icon name="ghostStack" /></button>
              <BarRule />
            </ViewBar>
            <FeaturePanel>
              <PanelSplit><Knob /></PanelSplit>
              <PanelTabs>
                {["assembly", "listBox", "config", "target", "ball"].map((n, i) => (
                  <PanelTab key={n} $on={i === 0} aria-label={n}><Icon name={n} /></PanelTab>
                ))}
                <button aria-label="More tabs"><Chevron d="M2 0l5 4.500L2 9" size={11} /></button>
              </PanelTabs>
              <FilterBox>
                <Icon name="filter" />
                <Caret />
                <input aria-label="Filter features" />
              </FilterBox>
              <TreeArea>
                <Tree>
                  {tree.map((n, i) => (
                    <TreeRow key={i} $level={n.level} $off={n.off}>
                      <Twist kind={n.twist} />
                      <Icon name={n.icon} />
                      {n.label}
                    </TreeRow>
                  ))}
                </Tree>
                <VScroll>
                  <button aria-label="Scroll up"><Chevron d="M1 6.500L4.500 3 8 6.500" /></button>
                  <VThumb />
                  <button aria-label="Scroll down"><Chevron d="M1 2.500L4.500 6 8 2.500" /></button>
                </VScroll>
              </TreeArea>
              <HScroll>
                <QuickButton $w={16} aria-label="Scroll left"><Chevron d="M6 1L2 4.500 6 8" /></QuickButton>
                <HThumb />
                <QuickButton $w={18} aria-label="Scroll right"><Chevron d="M3 1l4 3.500L3 8" /></QuickButton>
              </HScroll>
              <PanelFoot />
            </FeaturePanel>
            <Canvas>
              <HeadsUp>
                {headsUp.map(([n, caret]) => (
                  <React.Fragment key={n}>
                    <button aria-label={n}><Icon name={n} /></button>
                    {caret && <button data-caret aria-label={`${n} options`}><Caret color="#888" /></button>}
                  </React.Fragment>
                ))}
              </HeadsUp>
              <Roaster />
              <AxisTriad />
              <PanelHandle aria-label="Collapse panel"><Knob /></PanelHandle>
              <RailTabs>
                {["home", "books", "folderOpen", "palette", "ball", "listBox", "compass"].map((n) => (
                  <button key={n} aria-label={n}><Icon name={n} /></button>
                ))}
              </RailTabs>
            </Canvas>
          </StageBody>
          <ModelTabs>
            {["M3 1v7M8 1L4 4.500 8 8z", "M7 1L3 4.500 7 8z", "M2 1l4 3.500L2 8z", "M6 1v7M1 1l4 3.500L1 8z"].map((d) => (
              <StepButton key={d} aria-label="Step tabs">
                <svg width="10" height="10" viewBox="0 0 9 9" fill="#888" stroke="#888"><path d={d} /></svg>
              </StepButton>
            ))}
            <ModelTab $w={58} $on>Model</ModelTab>
            <ModelTab $w={68}>3D Views</ModelTab>
            <ModelTab $w={108}>Motion Study 1</ModelTab>
            <ModelTabsRest />
          </ModelTabs>
        </Stage>

        <TaskPane>
          <PaneHead>
            <button aria-label="Collapse pane">
              <svg width="12" height="9" viewBox="0 0 12 9" fill="none" stroke="#111" strokeWidth="1.800"><path d="M5.500 1L2 4.500 5.500 8M10.500 1L7 4.500 10.500 8" /></svg>
            </button>
            <h2>3DEXPERIENCE Marketplace</h2>
            <button aria-label="Pane settings"><Icon name="gear" size={16} /></button>
            <button aria-label="Pin pane"><Icon name="pinDark" size={14} /></button>
          </PaneHead>
          <PaneBody>
            <Notice>
              <h3>Update Available</h3>
              <p>A new update of the 3DEXPERIENCE Marketplace for SOLIDWORKS add-in is available for download: 6.32.4026</p>
              <NoticeButton $primary>Get the Update</NoticeButton>
              <NoticeButton>Not Now</NoticeButton>
              <CheckLine><input type="checkbox" />Don’t ask again for this update</CheckLine>
            </Notice>
            <Activation>
              <strong>Activate Windows</strong>
              Go to Settings to activate Windows.
            </Activation>
            <PaneScroll>
              <svg width="4" height="8" viewBox="0 0 4 8"><path d="M4 0v8L0 4z" fill="#888" /></svg>
              <div />
              <svg width="4" height="8" viewBox="0 0 4 8"><path d="M0 0v8l4-4z" fill="#333" /></svg>
            </PaneScroll>
          </PaneBody>
        </TaskPane>
      </Work>

      <StatusBar>
        <span>SOLIDWORKS Premium 2023 SP0.1</span>
        <StatusCell $w={94}>Under Defined</StatusCell>
        <StatusCell $w={209}>Editing Assembly</StatusCell>
        <StatusCell $w={54}>MMGS</StatusCell>
        <StatusCell $w={32}>
          <svg width="6" height="3" viewBox="0 0 6 3"><path d="M0 3h6L3 0z" fill="#333" /></svg>
        </StatusCell>
        <Icon name="rocket" size={17} />
      </StatusBar>

      <Taskbar>
        <TaskButton $w={48} aria-label="Start"><Icon name="windows" size={17} /></TaskButton>
        <WinSearch>
          <Icon name="lens" size={17} />
          <input placeholder="Type here to search" aria-label="Type here to search" />
          <FestiveArt />
        </WinSearch>
        <TaskButton $w={50} aria-label="Task view"><Icon name="taskView" size={17} /></TaskButton>
        <TaskButton $w={43} aria-label="Copilot"><Icon name="copilot" size={24} /></TaskButton>
        <TaskButton $w={43} aria-label="Installer"><Icon name="installer" size={24} /></TaskButton>
        <TaskButton $w={43} aria-label="Edge"><Icon name="edge" size={24} /></TaskButton>
        <TaskButton $w={43} aria-label="Store"><Icon name="store" size={23} /></TaskButton>
        <TaskButton $w={43} aria-label="Mail"><Icon name="mail" size={24} /><Badge $x={0}>2</Badge></TaskButton>
        <TaskButton $w={43} aria-label="Illustrator"><AppTile $size={22} $bg="#1d0f02" $fg="#f59120" $edge="#e27a1c">Ai</AppTile></TaskButton>
        <TaskButton $w={42} aria-label="AutoCAD"><AppTile $size={24} $bg="#f5f0ee" $fg="#c4281b" $edge="#f5f0ee">A</AppTile></TaskButton>
        <TaskButton $w={42} aria-label="Chrome"><Icon name="chrome" size={24} /></TaskButton>
        <TaskButton $w={42} aria-label="Password manager"><Icon name="key" size={21} /></TaskButton>
        <TaskButton $w={42} aria-label="Downloads"><Icon name="greenBook" size={24} /></TaskButton>
        <TaskButton $w={42} $state="on" aria-label="SOLIDWORKS 2023"><CadTile>SW<small>2023</small></CadTile></TaskButton>
        <TaskButton $w={42} aria-label="File Explorer"><Icon name="folderWin" size={23} /></TaskButton>
        <TaskButton $w={42} $state="open" aria-label="Chrome profile">
          <Icon name="chrome" size={24} />
          <Badge $x={5} $bg="#1a5fa8">A</Badge>
        </TaskButton>
        <Tray>
          <QuickButton $w={36} aria-label="Alert"><Icon name="warn" size={24} /></QuickButton>
          <TrayText dir="rtl">تنبيها...</TrayText>
          {["chevUp", "camera", "sync", "battery", "wifi", "volume"].map((n) => (
            <QuickButton key={n} $w={24} aria-label={n}><Icon name={n} /></QuickButton>
          ))}
          <QuickButton $w={36} aria-label="Keyboard language">ع</QuickButton>
          <Clock>21:21<br />01/11/2024</Clock>
          <QuickButton $w={40} aria-label="Notifications"><Icon name="notes" /><Badge $x={5}>2</Badge></QuickButton>
        </Tray>
      </Taskbar>

      <Watermark aria-hidden="true">
        <strong>مستقل</strong>
        <span>mostaql.com</span>
      </Watermark>
    </App>
  );
}
